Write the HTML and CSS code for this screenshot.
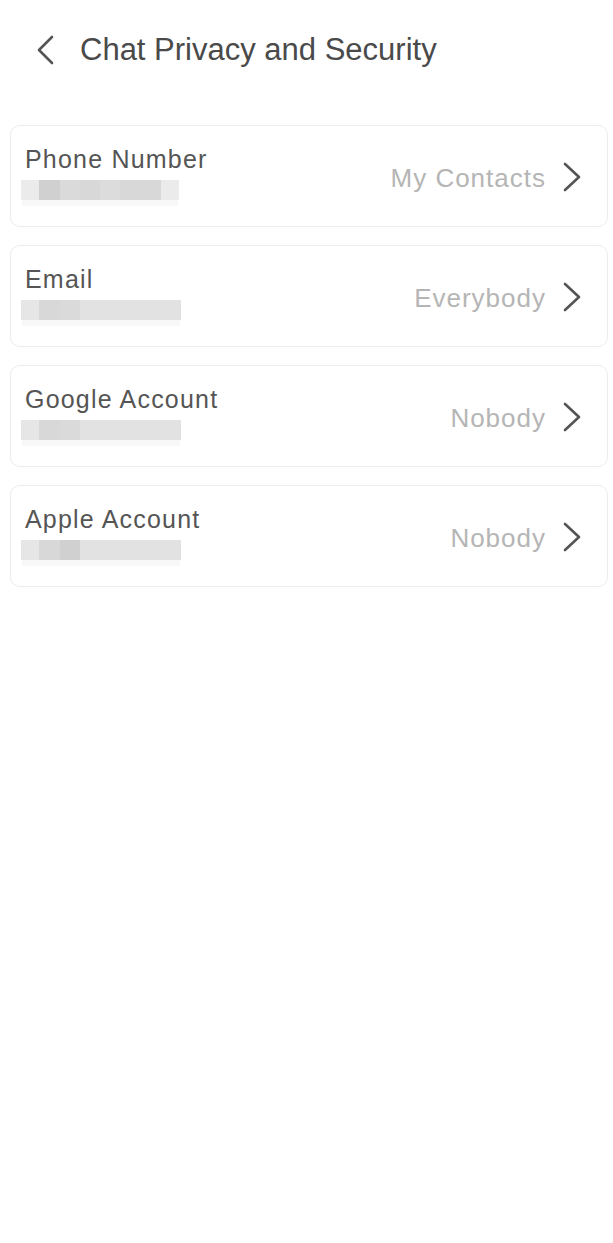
FILE: index.html
```html
<!doctype html>
<html>
  <head>
    <meta charset="UTF-8" />
    <meta name="viewport" content="width=device-width, initial-scale=1">
    <title>Chat Privacy and Security</title>
    <link rel="stylesheet" href="styles.css">
  </head>
  <body>
    <header class="topbar">
      <a class="back" href="#" aria-label="Back">
        <svg width="18" height="30" viewBox="0 0 18 30"><path d="M16 2 L3 15 L16 28" fill="none" stroke="#555" stroke-width="2.6" stroke-linecap="round" stroke-linejoin="round"/></svg>
      </a>
      <h1 class="title">Chat Privacy and Security</h1>
    </header>

    <ul class="list">
      <li class="card">
        <div class="info">
          <div class="label">Phone Number</div>
          <div class="masked">
            <span class="px w18 l1"></span><span class="px w21 d2"></span><span class="px w20 d1"></span><span class="px w20 d4"></span><span class="px w20 d3"></span><span class="px w41 d4"></span><span class="px w18 l1"></span>
          </div>
        </div>
        <div class="value">My Contacts</div>
        <svg class="chev" width="19" height="30" viewBox="0 0 19 30"><path d="M2 2 L16 15 L2 28" fill="none" stroke="#555" stroke-width="2.6" stroke-linecap="round" stroke-linejoin="round"/></svg>
      </li>
      <li class="card">
        <div class="info">
          <div class="label">Email</div>
          <div class="masked">
            <span class="px w18 l3"></span><span class="px w21 d4"></span><span class="px w20 d1"></span><span class="px w20 l2"></span><span class="px w81 l2"></span>
          </div>
        </div>
        <div class="value">Everybody</div>
        <svg class="chev" width="19" height="30" viewBox="0 0 19 30"><path d="M2 2 L16 15 L2 28" fill="none" stroke="#555" stroke-width="2.6" stroke-linecap="round" stroke-linejoin="round"/></svg>
      </li>
      <li class="card">
        <div class="info">
          <div class="label">Google Account</div>
          <div class="masked">
            <span class="px w18 l3"></span><span class="px w21 d4"></span><span class="px w20 d1"></span><span class="px w20 l2"></span><span class="px w81 l2"></span>
          </div>
        </div>
        <div class="value">Nobody</div>
        <svg class="chev" width="19" height="30" viewBox="0 0 19 30"><path d="M2 2 L16 15 L2 28" fill="none" stroke="#555" stroke-width="2.6" stroke-linecap="round" stroke-linejoin="round"/></svg>
      </li>
      <li class="card">
        <div class="info">
          <div class="label">Apple Account</div>
          <div class="masked">
            <span class="px w18 l3"></span><span class="px w21 d4"></span><span class="px w20 d2"></span><span class="px w20 l2"></span><span class="px w81 l2"></span>
          </div>
        </div>
        <div class="value">Nobody</div>
        <svg class="chev" width="19" height="30" viewBox="0 0 19 30"><path d="M2 2 L16 15 L2 28" fill="none" stroke="#555" stroke-width="2.6" stroke-linecap="round" stroke-linejoin="round"/></svg>
      </li>
    </ul>
  </body>
</html>
```

FILE: styles.css
```css
body {
  margin: 0;
  background: #fff;
  font-family: "Liberation Sans", Arial, sans-serif;
  color: #555;
}
.topbar {
  display: flex;
  align-items: center;
  height: 100px;
  padding: 0 0 0 36px;
  box-sizing: border-box;
}
.back {
  display: flex;
  width: 18px;
  height: 30px;
  margin-right: 26px;
}
.title {
  margin: 0;
  font-size: 31px;
  font-weight: normal;
  color: #4a4a4a;
}
.list {
  list-style: none;
  margin: 25px 5px 0 10px;
  padding: 0;
  display: flex;
  flex-direction: column;
  gap: 18px;
}
.card {
  display: flex;
  align-items: center;
  height: 102px;
  box-sizing: border-box;
  padding: 0 25px 0 10px;
  border: 1px solid #ececec;
  border-radius: 10px;
}
.info {
  flex: 1;
  align-self: flex-start;
  padding-top: 19px;
}
.label {
  font-size: 25px;
  line-height: 28px;
  letter-spacing: 1.2px;
  margin-left: 4px;
}
.masked {
  display: flex;
  margin-top: 7px;
  height: 20px;
  box-shadow: 0 7px 0 -1px #f8f8f8;
  width: max-content;
}
.px { display: block; height: 20px; }
.w18 { width: 18px; }
.w20 { width: 20px; }
.w21 { width: 21px; }
.w41 { width: 41px; }
.w81 { width: 81px; }
.l1 { background: #ebebeb; }
.l2 { background: #e2e2e2; }
.l3 { background: #e6e6e6; }
.d1 { background: #dadada; }
.d2 { background: #d0d0d0; }
.d3 { background: #dcdcdc; }
.d4 { background: #d8d8d8; }
.value {
  font-size: 26px;
  line-height: 30px;
  letter-spacing: 1px;
  color: #b5b5b5;
  margin-right: 17px;
  margin-top: 4px;
}
.chev {
  display: block;
  margin-top: 1px;
}
```
